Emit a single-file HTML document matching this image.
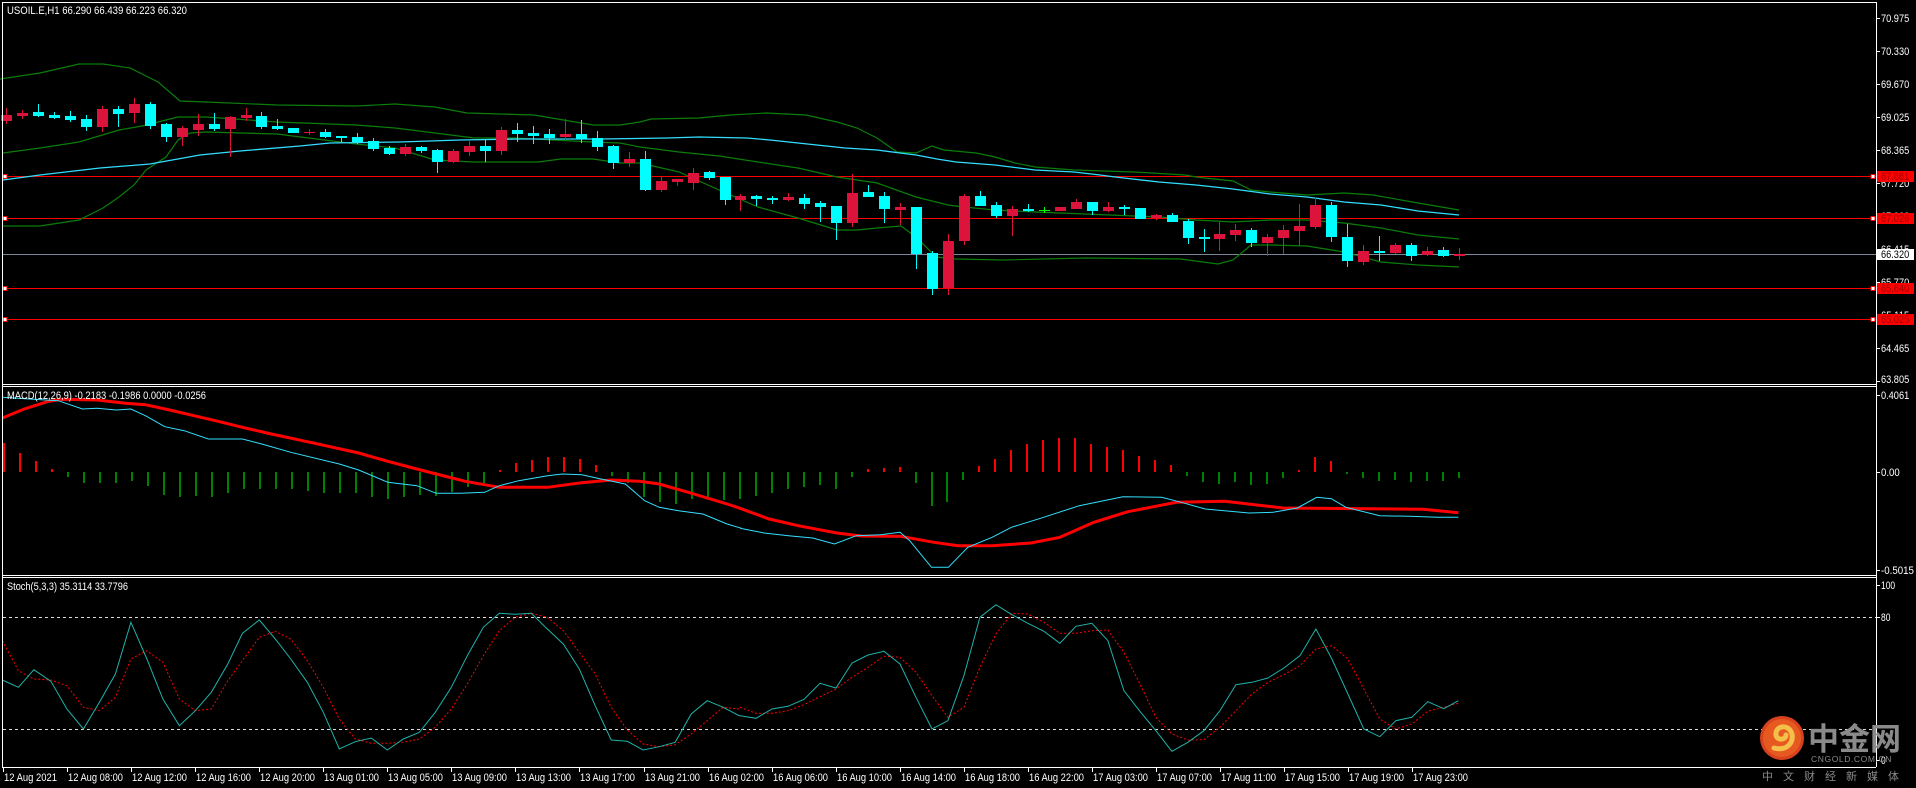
<!DOCTYPE html>
<html><head><meta charset="utf-8">
<style>
html,body{margin:0;padding:0;background:#000;width:1916px;height:788px;overflow:hidden}
svg{display:block}
text{font-family:"Liberation Sans",sans-serif;font-size:11px;fill:#fff}
</style></head>
<body>
<svg id="s" width="1916" height="788" viewBox="0 0 1916 788" xmlns="http://www.w3.org/2000/svg">
<rect width="1916" height="788" fill="#000"/>
<g id="g"></g>
<g stroke="#fff" stroke-width="1" fill="none" shape-rendering="crispEdges">
<line x1="2" y1="2.5" x2="1876" y2="2.5"/>
<line x1="2.5" y1="2" x2="2.5" y2="767"/>
<line x1="1876.5" y1="2" x2="1876.5" y2="767"/>
<line x1="2" y1="384.5" x2="1876" y2="384.5"/>
<line x1="2" y1="386.5" x2="1876" y2="386.5"/>
<line x1="2" y1="575.5" x2="1876" y2="575.5"/>
<line x1="2" y1="577.5" x2="1876" y2="577.5"/>
<line x1="2" y1="767.5" x2="1876" y2="767.5"/>
</g>
<text x="7" y="14" textLength="180" lengthAdjust="spacingAndGlyphs">USOIL.E,H1  66.290 66.439 66.223 66.320</text>
<text x="7" y="399" font-size="10" textLength="199" lengthAdjust="spacingAndGlyphs">MACD(12,26,9) -0.2183 -0.1986 0.0000 -0.0256</text>
<text x="7" y="590" font-size="10" textLength="121" lengthAdjust="spacingAndGlyphs">Stoch(5,3,3) 35.3114 33.7796</text>
<g>
<circle cx="1782" cy="738" r="22" fill="#d8401e"/>
<circle cx="1782" cy="738" r="19" fill="#e65a22"/>
<path d="M1774 748 C1790 752 1796 738 1790 730 C1785 724 1775 727 1776 735 C1777 741 1786 740 1786 735" stroke="#f5c04a" stroke-width="5" fill="none" stroke-linecap="round"/>
<text x="1808" y="750" style="font-family:'Liberation Sans','Noto Sans CJK SC',sans-serif;font-size:31px;font-weight:bold;fill:#8a8a8a">中金网</text>
<text x="1811" y="762" style="font-size:8.5px;fill:#8a8a8a;letter-spacing:0.6px">CNGOLD.COM.CN</text>
<text x="1762" y="780" style="font-family:'Liberation Sans','Noto Sans CJK SC',sans-serif;font-size:11px;fill:#8a8a8a;letter-spacing:10px">中文财经新媒体</text>
</g>
</svg>
<script>
var NS="http://www.w3.org/2000/svg",G=document.getElementById('g');
function el(t,a,p){var e=document.createElementNS(NS,t);for(var k in a)e.setAttribute(k,a[k]);(p||G).appendChild(e);return e;}
function txt(x,y,s,a){var e=el('text',Object.assign({x:x,y:y},a||{}));e.textContent=s;return e;}
function ax(x,y,s,a){var w=s.length*4.7;return txt(x,y,s,Object.assign({textLength:w.toFixed(1),lengthAdjust:'spacingAndGlyphs'},a||{}));}
function poly(pts,a){el('polyline',Object.assign({points:pts.map(function(p){return p[0].toFixed(1)+','+p[1].toFixed(1)}).join(' '),fill:'none'},a));}
function Z(ox,oy,sx,arr){return arr.map(function(p){return [ox+p[0]/sx,oy+p[1]/3];});}
var CY='#00ffff',RD='#dc143c',GR='#0a7d0a';
el('line',{x1:3,y1:254.5,x2:1876,y2:254.5,stroke:'#778899','shape-rendering':'crispEdges'});
[176,218,288,319].forEach(function(y){
 el('line',{x1:3,y1:y+.5,x2:1876,y2:y+.5,stroke:'#ff0000','shape-rendering':'crispEdges'});
 el('rect',{x:3,y:y-1.5,width:4,height:4,fill:'#fff',stroke:'#f00','stroke-width':1});
 el('rect',{x:1871,y:y-1.5,width:4,height:4,fill:'#fff',stroke:'#f00','stroke-width':1});
});
var up=[[0,79],[40,73],[79,64],[103,64],[130,68],[158,82],[180,101],[206,102],[277,105],[356,106],[395,104],[435,107],[467,113],[534,115],[593,125],[620,125],[640,122],[651,119],[699,118],[730,115],[766,113],[806,115],[837,122],[857,128],[877,138],[897,152],[916,153],[932,146],[944,150],[976,153],[995,157],[1015,163],[1035,167],[1074,170],[1134,172],[1185,175],[1196,177],[1233,181],[1251,190],[1270,192],[1307,195],[1344,193],[1373,195],[1418,203],[1459,210]];
var md=[[3,153],[40,148],[79,142],[119,130],[142,126],[178,117],[206,117],[277,122],[356,125],[395,128],[435,133],[474,138],[514,138],[593,142],[620,143],[640,147],[679,152],[719,156],[758,162],[798,168],[837,177],[877,183],[916,197],[948,205],[964,207],[995,210],[1035,212],[1085,214],[1159,217],[1196,220],[1233,222],[1270,220],[1307,220],[1344,223],[1381,228],[1418,235],[1459,239]];
var lo=[[3,226],[40,226],[79,220],[103,208],[119,197],[134,185],[146,170],[166,157],[178,140],[190,133],[206,132],[277,134],[356,144],[395,148],[435,160],[474,162],[538,162],[561,159],[593,159],[620,163],[640,163],[679,172],[719,190],[758,207],[798,218],[837,230],[857,230],[877,228],[901,226],[916,237],[936,257],[956,259],[1004,260],[1085,258],[1181,259],[1218,264],[1233,260],[1251,245],[1270,245],[1307,246],[1344,252],[1381,262],[1418,265],[1459,267]];
var ma=[[3,180],[40,175],[100,168],[150,164],[200,155],[240,151],[300,146],[330,143],[400,142],[460,140],[520,139],[600,139],[667,138],[699,137],[747,138],[770,140],[798,143],[845,148],[877,150],[900,153],[916,155],[937,159],[956,162],[995,165],[1035,170],[1074,172],[1100,175],[1115,177],[1159,182],[1196,185],[1233,189],[1270,194],[1307,197],[1344,202],[1381,205],[1418,211],[1459,215]];
[up,md,lo].forEach(function(a){poly(a,{stroke:GR,'stroke-width':1.2});});
poly(ma,{stroke:'#33ddff','stroke-width':1.3});
var C=[['r',115,121,108,124],['r',113,116,110,119],['c',112,116,104,117],['c',115,118,112,119],['c',116,120,111,122],['c',119,127,115,131],['r',109,127,106,132],['c',109,114,106,127],['r',104,113,98,123],['c',104,126,102,129],['c',124,137,123,142],['r',128,137,126,146],['r',124,130,114,136],['c',124,129,113,131],['r',117,129,116,157],['r',115,118,108,121],['c',116,127,112,129],['c',126,129,119,130],['c',128,133,128,133],['r',132,133,129,135],['c',132,137,129,138],['c',136,138,136,142],['c',137,142,133,144],['c',141,149,138,151],['c',148,154,146,155],['r',147,154,144,156],['c',147,151,146,153],['c',150,162,149,173],['r',151,162,149,163],['r',146,152,140,156],['c',146,151,140,162],['r',130,151,127,155],['c',130,134,123,142],['c',133,136,126,144],['c',134,138,129,144],['r',134,137,119,140],['c',134,139,120,143],['c',138,147,131,151],['c',146,163,145,169],
['r',159,163,152,167],['c',159,190,151,191],['r',181,190,177,192],['r',179,182,179,186],['r',173,183,168,190],['c',172,178,171,180],['c',177,200,177,205],['r',196,200,194,211],['c',196,199,195,206],['c',198,200,196,204],['r',197,200,193,201],['c',198,204,194,209],['c',203,207,201,222],['c',206,223,206,240],['r',193,223,174,227],['c',192,197,185,197],['c',196,209,192,223],['r',207,210,203,225],['c',207,254,207,269],['c',253,289,251,295],['r',241,288,234,295],['r',196,241,194,245],['c',196,206,191,206],['c',205,216,202,218],['r',209,216,206,236],['c',209,211,204,212],['g',210,210,207,213],['r',207,211,207,211],['r',202,209,199,209],['c',202,211,202,215],['r',207,211,202,212],['c',207,209,205,215],['c',208,219,208,219],['r',215,218,214,220],['c',215,222,213,222],['c',221,238,219,244],['c',237,239,229,252],['r',234,239,222,251],['r',230,235,224,241],['c',230,243,228,247],['r',237,243,234,256],['r',230,238,225,254],['r',226,231,204,246],['r',205,227,197,229],['c',205,237,202,242],['c',237,261,224,267],['r',251,262,245,265],['c',251,253,236,261],['r',245,253,243,254],['c',245,256,243,261],['r',251,255,247,256],['c',250,256,247,257],['r',254,256,248,260]];
var N=C.length,st=(1459-6)/(N-1);
C.forEach(function(c,i){
 var x=Math.round(6+i*st),col=c[0]=='c'?CY:(c[0]=='g'?'#00ff00':RD);
 el('rect',{x:x,y:c[3],width:1,height:Math.max(1,c[4]-c[3]),fill:col});
 var h=Math.max(1,c[2]-c[1]);
 el('rect',{x:x-5,y:c[1],width:11,height:h,fill:col});
});
[['70.975',18],['70.330',51],['69.670',84],['69.025',117],['68.365',150],['67.720',183],['67.060',216],['66.415',249],['65.770',282],['65.115',315],['64.465',348],['63.805',381]].forEach(function(t){
 el('line',{x1:1876,y1:t[1]+.5,x2:1880,y2:t[1]+.5,stroke:'#fff','shape-rendering':'crispEdges'});
 ax(1881,t[1]+(t[1]<372?4:2),t[0]);
});
[['67.861',176],['67.026',218],['65.640',288],['65.025',319]].forEach(function(t){
 el('rect',{x:1877,y:t[1]-5,width:37,height:11,fill:'#ff0000'});
 ax(1881,t[1]+4,t[0],{style:'fill:#a00000'});
});
el('rect',{x:1877,y:249,width:37,height:11,fill:'#fff'});
ax(1881,258,'66.320',{style:'fill:#000'});
var h1=[443,453,461,469,477,483,483,483,481,486,495,497,496,497,493,489,489,489,489,491,493,493,493,497,499,497,495,496,492,487,483,470,463,460,457,457,459,465,476,483,497,502,504,499,497,500,499];
var h2=[496,493,489,487,485,489,477,469,468,467,483,506,502,480,466,459,450,444,440,438,438,444,447,450,456,460,465,476,482,484,482,485,484,478,470,457,461,474,478,481,480,482,481,481,478];
var H=h1.concat(h2),Z0=472,hs=(1458-3.4)/(H.length-1);
H.forEach(function(v,i){var x=Math.round(3.4+i*hs);
 el('rect',{x:x,y:Math.min(v,Z0),width:2,height:Math.abs(v-Z0)||1,fill:v<Z0?'#ff0000':'#008000'});});
var m1=Z(0,384,2.063,[[5,40],[60,45],[120,50],[170,75],[200,73],[240,78],[270,75],[300,95],[340,128],[380,140],[430,165],[500,165],[540,180],[600,205],[700,240],[740,258],[800,295],[860,305],[900,328],[950,328],[1000,325],[1030,305],[1070,290],[1130,275],[1160,270],[1200,272],[1240,285],[1290,300],[1330,350],[1360,370],[1400,380],[1450,390],[1500,420],[1530,433]]).concat(Z(740,384,2.063,[[0,433],[50,447],[100,455],[150,462],[195,480],[240,455],[290,452],[330,445],[350,470],[395,550],[430,550],[470,490],[520,460],[560,430],[620,403],[700,365],[790,338],[870,340],[910,355],[960,375],[1050,387],[1100,385],[1150,372],[1190,340],[1220,344],[1250,370],[1320,395],[1380,397],[1440,400],[1482,400]]));
var m2=Z(0,384,2.063,[[5,102],[50,75],[100,52],[130,46],[200,48],[260,58],[300,62],[350,78],[400,95],[450,112],[500,130],[560,150],[640,175],[740,207],[800,232],[860,255],[900,270],[960,292],[1030,310],[1130,310],[1200,296],[1260,288],[1320,292],[1360,300],[1420,325],[1500,360],[1527,373]]).concat(Z(740,384,2.063,[[0,373],[60,405],[120,425],[200,447],[250,456],[330,457],[400,475],[450,485],[520,485],[600,477],[660,460],[730,415],[800,383],[900,355],[1000,352],[1120,372],[1300,374],[1410,376],[1482,386]]));
poly(m2,{stroke:'#ff0000','stroke-width':3});
poly(m1,{stroke:'#33e0ff','stroke-width':1});
[['0.4061',395],['0.00',472],['-0.5015',570]].forEach(function(t){
 el('line',{x1:1876,y1:t[1]+.5,x2:1880,y2:t[1]+.5,stroke:'#fff'});ax(1881,t[1]+4,t[0]);});
[617,729].forEach(function(y){el('line',{x1:3,y1:y+.5,x2:1876,y2:y+.5,stroke:'#ddd','stroke-dasharray':'3,3'});});
[['100',585],['80',617],['0',760]].forEach(function(t){
 el('line',{x1:1876,y1:t[1]+.5,x2:1880,y2:t[1]+.5,stroke:'#fff'});ax(1881,t[1]+4,t[0]);});
var k=Z(0,574,2.063,[[5,318],[38,340],[70,287],[105,322],[138,405],[172,465],[205,385],[238,300],[270,145],[303,255],[336,375],[370,455],[403,410],[436,355],[470,270],[500,178],[535,138],[568,195],[600,255],[634,325],[667,415],[700,525],[733,503],[766,492],[799,528],[832,495],[865,475],[898,415],[931,340],[964,245],[997,160],[1030,118],[1063,121],[1096,118],[1129,165],[1162,210],[1195,285],[1228,395],[1261,498],[1294,502],[1327,528],[1360,518],[1393,505],[1426,420],[1459,380],[1492,400],[1525,425]]).concat(Z(740,574,2.063,[[0,425],[33,433],[66,405],[99,397],[132,376],[165,328],[198,342],[231,267],[264,243],[297,232],[330,270],[363,370],[396,465],[429,440],[462,305],[495,130],[528,92],[561,122],[594,148],[627,172],[660,208],[693,157],[726,148],[759,200],[792,350],[825,412],[858,470],[891,532],[924,505],[957,470],[990,410],[1023,332],[1056,325],[1089,312],[1122,282],[1155,245],[1188,165],[1221,255],[1254,360],[1287,465],[1320,488],[1353,440],[1386,430],[1419,383],[1452,404],[1482,380]]));
var d=Z(0,574,2.063,[[5,200],[38,290],[70,315],[105,318],[138,335],[172,400],[205,410],[238,370],[270,255],[303,230],[336,265],[370,375],[403,410],[436,405],[470,320],[500,260],[535,190],[568,172],[600,195],[634,260],[667,340],[700,435],[733,495],[766,508],[799,508],[832,505],[865,495],[898,460],[931,405],[964,330],[997,245],[1030,170],[1063,130],[1096,118],[1129,130],[1162,170],[1195,235],[1228,300],[1261,400],[1294,468],[1327,510],[1360,518],[1393,512],[1426,480],[1459,440],[1492,400],[1525,405]]).concat(Z(740,574,2.063,[[0,400],[33,418],[66,418],[99,410],[132,392],[165,368],[198,345],[231,310],[264,280],[297,247],[330,250],[363,295],[396,365],[429,430],[462,400],[495,280],[528,180],[561,118],[594,120],[627,145],[660,178],[693,178],[726,170],[759,168],[792,235],[825,330],[858,430],[891,480],[924,498],[957,497],[990,460],[1023,410],[1056,360],[1089,325],[1122,302],[1155,275],[1188,225],[1221,215],[1254,255],[1287,345],[1320,435],[1353,465],[1386,450],[1419,412],[1452,400],[1482,388]]));
poly(d,{stroke:'#ff0000','stroke-width':1,'stroke-dasharray':'2,2'});
poly(k,{stroke:'#20b2aa','stroke-width':1});
var L=['12 Aug 2021','12 Aug 08:00','12 Aug 12:00','12 Aug 16:00','12 Aug 20:00','13 Aug 01:00','13 Aug 05:00','13 Aug 09:00','13 Aug 13:00','13 Aug 17:00','13 Aug 21:00','16 Aug 02:00','16 Aug 06:00','16 Aug 10:00','16 Aug 14:00','16 Aug 18:00','16 Aug 22:00','17 Aug 03:00','17 Aug 07:00','17 Aug 11:00','17 Aug 15:00','17 Aug 19:00','17 Aug 23:00'];
L.forEach(function(s,i){var x=3+i*64.05;
 el('line',{x1:Math.round(x)+.5,y1:767,x2:Math.round(x)+.5,y2:772,stroke:'#fff'});
 txt(Math.round(x)+1,781,s,{'font-size':10,textLength:(i==0?53:55),lengthAdjust:'spacingAndGlyphs'});});
</script>
</body></html>
